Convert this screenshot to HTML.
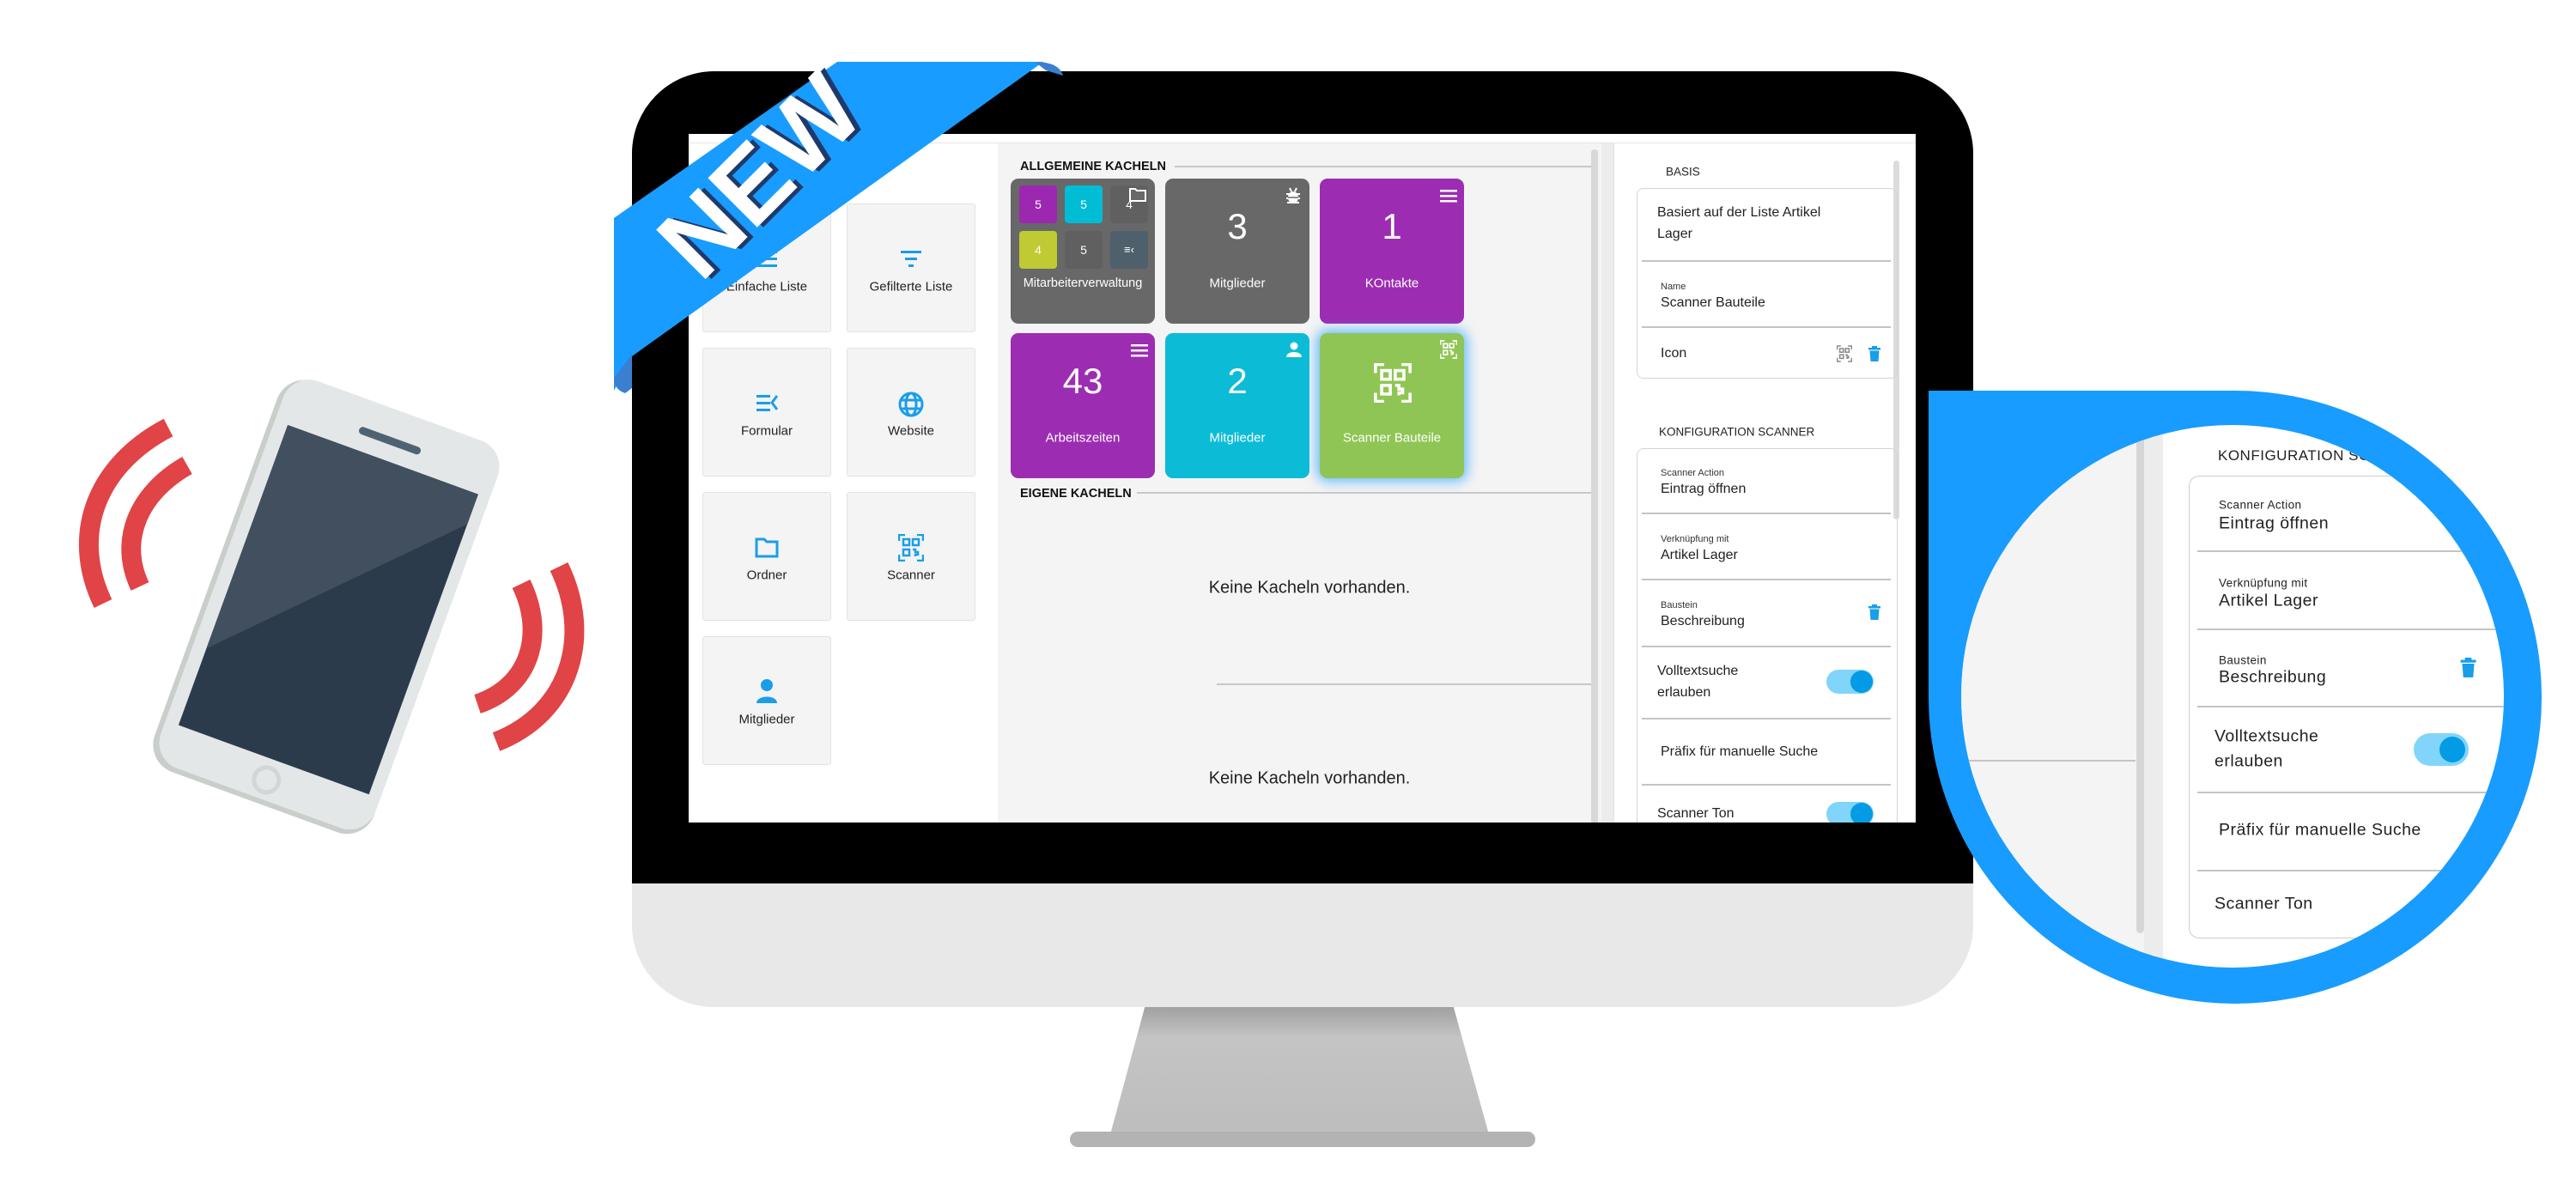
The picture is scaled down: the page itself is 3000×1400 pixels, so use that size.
<!DOCTYPE html>
<html><head><meta charset="utf-8"><style>
*{margin:0;padding:0;box-sizing:border-box}
body{width:3000px;height:1400px;background:#fff;position:relative;overflow:hidden;font-family:"Liberation Sans",sans-serif;color:#222}
.a{position:absolute}
.t{position:absolute;white-space:nowrap;transform:translateY(-50%)}
.c{position:absolute;white-space:nowrap;transform:translate(-50%,-50%)}
.st{position:absolute;background:#f4f4f4;border:1px solid #e2e2e2;border-radius:3px;width:150px;height:150px}
.tile{position:absolute;width:168px;height:169px;border-radius:9px;color:#fff}
.num{position:absolute;left:0;right:0;top:56px;transform:translateY(-50%);text-align:center;font-size:42px}
.lbl{position:absolute;left:0;right:0;top:122px;transform:translateY(-50%);text-align:center;font-size:15px}
.mini{position:absolute;width:44px;height:44px;border-radius:4px;color:#fff;font-size:14px;text-align:center;line-height:44px}
.div{position:absolute;height:1.5px;background:#c4c4c4}
.sm{font-size:11px;color:#333}
.md{font-size:16px;color:#222}
</style></head><body>

<!-- phone -->
<svg class="a" style="left:0;top:380px" width="720" height="640" viewBox="0 380 720 640">
 <g transform="rotate(20 380 705)">
  <rect x="244" y="465" width="272" height="484" rx="34" fill="#c9cecb"/>
  <rect x="250" y="463" width="266" height="480" rx="32" fill="#e3e7e8"/>
  <rect x="266" y="523" width="236" height="372" fill="#2c3b4c"/>
  <polygon points="266,523 502,523 502,560 266,800" fill="#424f5e"/>
  <rect x="346" y="495" width="76" height="9" rx="4.5" fill="#4f6272"/>
  <circle cx="384" cy="920" r="17" fill="#d2d6d4"/>
  <circle cx="384" cy="920" r="12" fill="#e3e7e8"/>
 </g>
 <g fill="none" stroke="#e04446" stroke-width="23">
  <path d="M196,498 C115,540 80,620 120,703"/>
  <path d="M218,542 C160,575 138,630 163,683"/>
  <path d="M651,660 C690,740 665,830 578,864"/>
  <path d="M607,680 C636,740 616,800 556,820"/>
 </g>
</svg>

<!-- monitor stand -->
<svg class="a" style="left:1230px;top:1160px" width="580" height="190" viewBox="1230 1160 580 190">
 <defs><linearGradient id="g" x1="0" y1="0" x2="0" y2="1"><stop offset="0" stop-color="#9e9e9e"/><stop offset="0.25" stop-color="#c4c4c4"/><stop offset="1" stop-color="#bdbdbd"/></linearGradient></defs>
 <polygon points="1334,1170 1692,1170 1735,1325 1292,1325" fill="url(#g)"/>
 <rect x="1246" y="1318" width="542" height="18" rx="9" fill="#b3b3b3"/>
</svg>

<!-- monitor -->
<div class="a" style="left:736px;top:83px;width:1562px;height:1090px;border-radius:96px;background:#e8e8e8;overflow:hidden">
 <div class="a" style="left:0;top:0;width:1562px;height:946px;background:#000"></div>
</div>

<!-- screen -->
<div class="a" style="left:802px;top:156px;width:1429px;height:802px;background:#fff;overflow:hidden">
 <div class="a" style="left:0;top:10px;width:1429px;height:1px;background:#e4e4e4"></div>
 <div class="a" style="left:360px;top:11px;width:703px;height:800px;background:#f4f4f4"></div>
 <div class="a" style="left:1051px;top:18px;width:8px;height:790px;border-radius:4px;background:#d8d8d8"></div>
 <div class="a" style="left:1063px;top:11px;width:15px;height:800px;background:#ececec"></div>
 <div class="a" style="left:1077px;top:11px;width:1px;height:800px;background:#e0e0e0"></div>
 <div class="a" style="left:1403px;top:31px;width:7px;height:418px;border-radius:4px;background:#dcdcdc"></div>
</div>

<!-- sidebar tiles -->
<div class="st" style="left:818px;top:237px"></div>
<div class="st" style="left:986px;top:237px"></div>
<div class="st" style="left:818px;top:405px"></div>
<div class="st" style="left:986px;top:405px"></div>
<div class="st" style="left:818px;top:573px"></div>
<div class="st" style="left:986px;top:573px"></div>
<div class="st" style="left:818px;top:741px"></div>

<svg class="a" style="left:880px;top:290px" width="26" height="22" viewBox="0 0 26 22"><g fill="#1a9ee8"><rect x="1" y="2" width="24" height="3"/><rect x="1" y="10" width="24" height="3"/><rect x="1" y="18" width="24" height="3"/></g></svg>
<div class="c" style="left:893px;top:334px;font-size:15px">Einfache Liste</div>
<svg class="a" style="left:1048px;top:290px" width="26" height="22" viewBox="0 0 26 22"><g fill="#1a9ee8"><rect x="1" y="2" width="24" height="3"/><rect x="6" y="10" width="14" height="3"/><rect x="10" y="18" width="6" height="3"/></g></svg>
<div class="c" style="left:1061px;top:334px;font-size:15px">Gefilterte Liste</div>
<svg class="a" style="left:880px;top:458px" width="26" height="22" viewBox="0 0 26 22"><g fill="#1a9ee8"><rect x="1" y="2" width="16" height="3"/><rect x="1" y="10" width="16" height="3"/><rect x="1" y="18" width="16" height="3"/></g><path d="M25,3 L19,11 L25,19" stroke="#1a9ee8" stroke-width="3" fill="none"/></svg>
<div class="c" style="left:893px;top:502px;font-size:15px">Formular</div>
<svg class="a" style="left:1045px;top:455px" width="32" height="32" viewBox="0 0 32 32"><g fill="none" stroke="#1a9ee8" stroke-width="3"><circle cx="16" cy="16" r="13"/><ellipse cx="16" cy="16" rx="6" ry="13"/><line x1="3" y1="11" x2="29" y2="11"/><line x1="3" y1="21" x2="29" y2="21"/></g></svg>
<div class="c" style="left:1061px;top:502px;font-size:15px">Website</div>
<svg class="a" style="left:879px;top:626px" width="28" height="24" viewBox="0 0 28 24"><path d="M2,2 H11 L14,5 H26 V22 H2 Z" fill="none" stroke="#1a9ee8" stroke-width="3"/></svg>
<div class="c" style="left:893px;top:670px;font-size:15px">Ordner</div>
<svg class="a" style="left:1046px;top:622px" width="30" height="32" viewBox="0 0 30 32"><g fill="none" stroke="#1a9ee8" stroke-width="2.5"><path d="M1,8 V1 H8 M22,1 H29 V8 M29,24 V31 H22 M8,31 H1 V24"/><rect x="6" y="6" width="7" height="7"/><rect x="17" y="6" width="7" height="7"/><rect x="6" y="18" width="7" height="7"/><path d="M17,18 h3 v3 h3 v3 h-3 v2"/></g></svg>
<div class="c" style="left:1061px;top:670px;font-size:15px">Scanner</div>
<svg class="a" style="left:880px;top:790px" width="26" height="30" viewBox="0 0 26 30"><circle cx="13" cy="8" r="7" fill="#1a9ee8"/><path d="M1,29 C1,19 25,19 25,29 Z" fill="#1a9ee8"/></svg>
<div class="c" style="left:893px;top:838px;font-size:15px">Mitglieder</div>

<!-- middle -->
<div class="t" style="left:1188px;top:194px;font-size:14.5px;font-weight:bold;color:#111">ALLGEMEINE KACHELN</div>
<div class="a" style="left:1368px;top:193px;width:485px;height:1.5px;background:#c8c8c8"></div>

<div class="tile" style="left:1177px;top:208px;background:#686868">
 <div class="mini" style="left:10px;top:8px;background:#9c27b0">5</div>
 <div class="mini" style="left:63px;top:8px;background:#00bcd4">5</div>
 <div class="mini" style="left:116px;top:8px;background:#606060">4</div>
 <svg class="a" style="left:137px;top:10px" width="22" height="18" viewBox="0 0 22 18"><path d="M2,2 H8 L10,4 H20 V16 H2 Z" fill="#686868" stroke="#fff" stroke-width="2"/></svg>
 <div class="mini" style="left:10px;top:61px;background:#c0ca33">4</div>
 <div class="mini" style="left:63px;top:61px;background:#606060">5</div>
 <div class="mini" style="left:116px;top:61px;background:#4e606b;font-size:13px">≡‹</div>
 <div class="lbl" style="font-size:14.5px">Mitarbeiterverwaltung</div>
</div>
<div class="tile" style="left:1357px;top:208px;background:#686868">
 <div class="num">3</div><div class="lbl">Mitglieder</div>
 <svg class="a" style="left:140px;top:10px" width="18" height="20" viewBox="0 0 18 20"><ellipse cx="9" cy="12" rx="6" ry="7" fill="#fff"/><g stroke="#fff" stroke-width="2"><line x1="1" y1="8" x2="17" y2="8"/><line x1="1" y1="13" x2="17" y2="13"/><line x1="2" y1="18" x2="16" y2="18"/><line x1="5" y1="1" x2="7" y2="5"/><line x1="13" y1="1" x2="11" y2="5"/></g><line x1="3" y1="12" x2="15" y2="12" stroke="#686868" stroke-width="1.5"/></svg>
</div>
<div class="tile" style="left:1537px;top:208px;background:#9c2db2">
 <div class="num">1</div><div class="lbl">KOntakte</div>
 <svg class="a" style="left:140px;top:12px" width="20" height="16" viewBox="0 0 20 16"><g fill="#fff"><rect y="1" width="20" height="2.5"/><rect y="7" width="20" height="2.5"/><rect y="13" width="20" height="2.5"/></g></svg>
</div>
<div class="tile" style="left:1177px;top:388px;background:#9c2db2">
 <div class="num">43</div><div class="lbl">Arbeitszeiten</div>
 <svg class="a" style="left:140px;top:12px" width="20" height="16" viewBox="0 0 20 16"><g fill="#fff"><rect y="1" width="20" height="2.5"/><rect y="7" width="20" height="2.5"/><rect y="13" width="20" height="2.5"/></g></svg>
</div>
<div class="tile" style="left:1357px;top:388px;background:#0cbcd6">
 <div class="num">2</div><div class="lbl">Mitglieder</div>
 <svg class="a" style="left:141px;top:10px" width="18" height="18" viewBox="0 0 18 18"><circle cx="9" cy="5" r="4.5" fill="#fff"/><path d="M0,18 C0,10 18,10 18,18 Z" fill="#fff"/></svg>
</div>
<div class="tile" style="left:1537px;top:388px;background:#8fc554;box-shadow:0 0 14px 4px rgba(60,170,255,0.75)">
 <svg class="a" style="left:62px;top:35px" width="46" height="46" viewBox="0 0 30 32"><g fill="none" stroke="#fff" stroke-width="2.5"><path d="M1,8 V1 H8 M22,1 H29 V8 M29,24 V31 H22 M8,31 H1 V24"/><rect x="6" y="6" width="7" height="7"/><rect x="17" y="6" width="7" height="7"/><rect x="6" y="18" width="7" height="7"/><path d="M17,18 h3 v3 h3 v3 h-3 v2"/></g></svg>
 <svg class="a" style="left:140px;top:8px" width="20" height="22" viewBox="0 0 30 32"><g fill="none" stroke="#fff" stroke-width="2.5"><path d="M1,8 V1 H8 M22,1 H29 V8 M29,24 V31 H22 M8,31 H1 V24"/><rect x="6" y="6" width="7" height="7"/><rect x="17" y="6" width="7" height="7"/><rect x="6" y="18" width="7" height="7"/><path d="M17,18 h3 v3 h3 v3 h-3 v2"/></g></svg>
 <div class="lbl">Scanner Bauteile</div>
</div>

<div class="t" style="left:1188px;top:575px;font-size:14.5px;font-weight:bold;color:#111">EIGENE KACHELN</div>
<div class="a" style="left:1324px;top:573px;width:529px;height:1.5px;background:#c8c8c8"></div>
<div class="c" style="left:1525px;top:685px;font-size:20px">Keine Kacheln vorhanden.</div>
<div class="a" style="left:1417px;top:796px;width:436px;height:1.5px;background:#c8c8c8"></div>
<div class="c" style="left:1525px;top:907px;font-size:20px">Keine Kacheln vorhanden.</div>

<!-- right panel -->
<div class="t" style="left:1940px;top:200px;font-size:13.5px">BASIS</div>
<div class="a" style="left:1906px;top:219px;width:304px;height:222px;border:1px solid #d4d4d4;border-radius:8px"></div>
<div class="t md" style="left:1930px;top:248px">Basiert auf der Liste Artikel</div>
<div class="t md" style="left:1930px;top:273px">Lager</div>
<div class="div" style="left:1912px;top:303px;width:290px"></div>
<div class="t sm" style="left:1934px;top:334px">Name</div>
<div class="t md" style="left:1934px;top:353px">Scanner Bauteile</div>
<div class="div" style="left:1912px;top:380px;width:290px"></div>
<div class="t md" style="left:1934px;top:412px">Icon</div>
<svg class="a" style="left:2139px;top:402px" width="18" height="20" viewBox="0 0 30 32"><g fill="none" stroke="#888" stroke-width="2.5"><path d="M1,8 V1 H8 M22,1 H29 V8 M29,24 V31 H22 M8,31 H1 V24"/><rect x="6" y="6" width="7" height="7"/><rect x="17" y="6" width="7" height="7"/><rect x="6" y="18" width="7" height="7"/><path d="M17,18 h3 v3 h3 v3 h-3 v2"/></g></svg>
<svg class="a" style="left:2176px;top:403px" width="14" height="18" viewBox="0 0 14 18"><g fill="#1a9ee8"><rect x="0" y="2" width="14" height="2.5"/><rect x="4" y="0" width="6" height="3"/><path d="M1.5,5.5 H12.5 L11.5,18 H2.5 Z"/></g></svg>

<div class="t" style="left:1932px;top:503px;font-size:13.5px">KONFIGURATION SCANNER</div>
<div class="a" style="left:1906px;top:522px;width:304px;height:450px;border:1px solid #d4d4d4;border-radius:8px"></div>
<div class="t sm" style="left:1934px;top:551px">Scanner Action</div>
<div class="t md" style="left:1934px;top:570px">Eintrag öffnen</div>
<div class="div" style="left:1912px;top:597px;width:290px"></div>
<div class="t sm" style="left:1934px;top:628px">Verknüpfung mit</div>
<div class="t md" style="left:1934px;top:647px">Artikel Lager</div>
<div class="div" style="left:1912px;top:674px;width:290px"></div>
<div class="t sm" style="left:1934px;top:705px">Baustein</div>
<div class="t md" style="left:1934px;top:724px">Beschreibung</div>
<svg class="a" style="left:2176px;top:704px" width="14" height="18" viewBox="0 0 14 18"><g fill="#1a9ee8"><rect x="0" y="2" width="14" height="2.5"/><rect x="4" y="0" width="6" height="3"/><path d="M1.5,5.5 H12.5 L11.5,18 H2.5 Z"/></g></svg>
<div class="div" style="left:1912px;top:752px;width:290px"></div>
<div class="t md" style="left:1930px;top:782px">Volltextsuche</div>
<div class="t md" style="left:1930px;top:807px">erlauben</div>
<div class="a" style="left:2127px;top:780px;width:55px;height:28px;border-radius:14px;background:#81d4fa"></div>
<div class="a" style="left:2155px;top:781px;width:26px;height:26px;border-radius:13px;background:#039be5"></div>
<div class="div" style="left:1912px;top:836px;width:290px"></div>
<div class="t md" style="left:1934px;top:876px">Präfix für manuelle Suche</div>
<div class="div" style="left:1912px;top:913px;width:290px"></div>
<div class="t md" style="left:1930px;top:948px">Scanner Ton</div>
<div class="a" style="left:2127px;top:934px;width:55px;height:28px;border-radius:14px;background:#81d4fa"></div>
<div class="a" style="left:2155px;top:935px;width:26px;height:26px;border-radius:13px;background:#039be5"></div>

<!-- bezel cover below screen -->
<div class="a" style="left:800px;top:958px;width:1440px;height:71px;background:#000"></div>

<!-- NEW ribbon -->
<svg class="a" style="left:700px;top:60px" width="560" height="420" viewBox="700 60 560 420">
 <polygon points="975,72 1215,72 736,415 715,455 715,254" fill="#189cff"/>
 <path d="M1205,72 C1225,72 1235,78 1238,88 L1218,82 Z" fill="#3a7fd0"/>
 <path d="M736,413 L715,440 C715,450 720,455 728,458 L736,452 Z" fill="#3a7fd0"/>
 <g transform="translate(885,205) rotate(-45)">
  <text x="5" y="45" text-anchor="middle" font-family="Liberation Sans" font-weight="bold" font-size="118" fill="#1f3a6a">NEW</text>
  <text x="0" y="40" text-anchor="middle" font-family="Liberation Sans" font-weight="bold" font-size="118" fill="#fff">NEW</text>
 </g>
</svg>

<!-- magnifier -->
<div class="a" style="left:2246px;top:455px;width:714px;height:714px;background:#189cff;border-radius:0 50% 50% 50%"></div>
<div class="a" style="left:2284px;top:495px;width:632px;height:632px;border-radius:50%;overflow:hidden;background:#fff">
 <div class="a" style="left:0;top:0;width:235px;height:632px;background:#f4f4f4"></div>
 <div class="a" style="left:204px;top:0;width:9px;height:592px;border-radius:5px;background:#d6d6d6"></div>
 <div class="a" style="left:213px;top:0;width:22px;height:632px;background:#ececec"></div>
 <div class="a" style="left:0;top:390px;width:203px;height:2px;background:#c4c4c4"></div>
 <div class="t" style="left:299px;top:36px;font-size:17px;letter-spacing:0.5px">KONFIGURATION SCANNER</div>
 <div class="a" style="left:265px;top:59px;width:460px;height:539px;border:1.5px solid #ccc;border-radius:12px"></div>
 <div class="t" style="left:300px;top:93px;font-size:13.5px;letter-spacing:0.4px">Scanner Action</div>
 <div class="t" style="left:300px;top:115px;font-size:19.5px;letter-spacing:0.5px">Eintrag öffnen</div>
 <div class="div" style="left:275px;top:146px;width:420px;height:2px"></div>
 <div class="t" style="left:300px;top:184px;font-size:13.5px;letter-spacing:0.4px">Verknüpfung mit</div>
 <div class="t" style="left:300px;top:205px;font-size:19.5px;letter-spacing:0.5px">Artikel Lager</div>
 <div class="div" style="left:275px;top:237px;width:420px;height:2px"></div>
 <div class="t" style="left:300px;top:274px;font-size:13.5px;letter-spacing:0.4px">Baustein</div>
 <div class="t" style="left:300px;top:294px;font-size:19.5px;letter-spacing:0.5px">Beschreibung</div>
 <svg class="a" style="left:581px;top:271px" width="19" height="23" viewBox="0 0 14 18"><g fill="#1a9ee8"><rect x="0" y="2" width="14" height="2.5"/><rect x="4" y="0" width="6" height="3"/><path d="M1.5,5.5 H12.5 L11.5,18 H2.5 Z"/></g></svg>
 <div class="div" style="left:275px;top:327px;width:420px;height:2px"></div>
 <div class="t" style="left:295px;top:363px;font-size:19.5px;letter-spacing:0.5px">Volltextsuche</div>
 <div class="t" style="left:295px;top:392px;font-size:19.5px;letter-spacing:0.5px">erlauben</div>
 <div class="a" style="left:527px;top:359px;width:64px;height:38px;border-radius:19px;background:#81d4fa"></div>
 <div class="a" style="left:557px;top:363px;width:30px;height:30px;border-radius:15px;background:#039be5"></div>
 <div class="div" style="left:275px;top:427px;width:420px;height:2px"></div>
 <div class="t" style="left:300px;top:472px;font-size:19.5px;letter-spacing:0.5px">Präfix für manuelle Suche</div>
 <div class="div" style="left:275px;top:518px;width:420px;height:2px"></div>
 <div class="t" style="left:295px;top:558px;font-size:19.5px;letter-spacing:0.5px">Scanner Ton</div>
</div>

</body></html>
